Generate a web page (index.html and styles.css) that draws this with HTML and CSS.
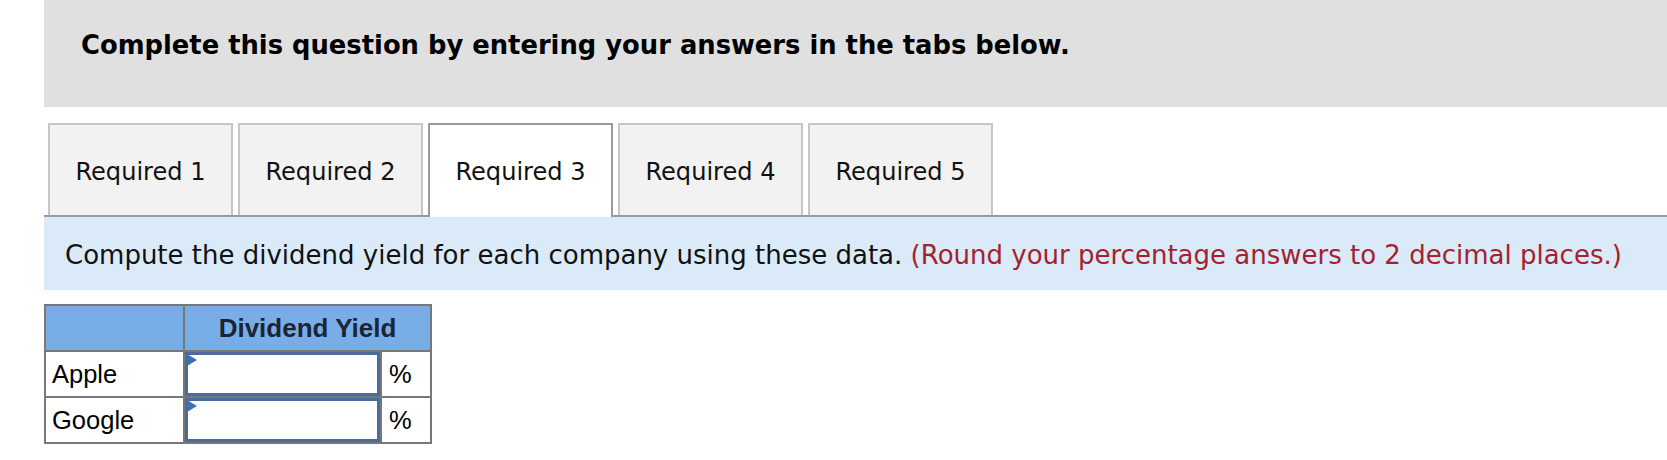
FILE: index.html
```html
<!DOCTYPE html>
<html lang="en">
<head>
<meta charset="utf-8">
<title>Dividend Yield</title>
<link rel="stylesheet" href="styles.css">
</head>
<body>
<div class="wrap">
  <div class="header">
    <h1 class="title">Complete this question by entering your answers in the tabs below.</h1>
  </div>
  <div class="tabs">
    <div class="tab">Required 1</div>
    <div class="tab">Required 2</div>
    <div class="tab active">Required 3</div>
    <div class="tab">Required 4</div>
    <div class="tab">Required 5</div>
  </div>
  <div class="instructions">
    <p class="instr-text">Compute the dividend yield for each company using these data. <span class="note">(Round your percentage answers to 2 decimal places.)</span></p>
  </div>
  <table class="grid">
    <colgroup>
      <col class="c-name">
      <col class="c-input">
      <col class="c-unit">
    </colgroup>
    <thead>
      <tr>
        <th class="blank"></th>
        <th colspan="2">Dividend Yield</th>
      </tr>
    </thead>
    <tbody>
      <tr>
        <td class="name">Apple</td>
        <td class="cell"><span class="flag"></span><input class="answer" type="text"></td>
        <td class="unit">%</td>
      </tr>
      <tr>
        <td class="name">Google</td>
        <td class="cell"><span class="flag"></span><input class="answer" type="text"></td>
        <td class="unit">%</td>
      </tr>
    </tbody>
  </table>
</div>
</body>
</html>
```
FILE: styles.css
```css
html, body {
  margin: 0;
  padding: 0;
  background: #ffffff;
}

body {
  font-family: "DejaVu Sans", Verdana, sans-serif;
  color: #000;
}

.wrap {
  margin-left: 44px;
}

.header {
  height: 107px;
  background: #e0e0e0;
  box-sizing: border-box;
  padding: 29px 0 0 37px;
}

.title {
  margin: 0;
  font-size: 25.8px;
  line-height: 32px;
  font-weight: bold;
  color: #000;
}

.tabs {
  display: flex;
  gap: 5px;
  margin-top: 16px;
  padding-left: 4px;
  border-bottom: 2px solid #9a9a9a;
  height: 92px;
}

.tab {
  width: 185px;
  height: 92px;
  box-sizing: border-box;
  border: 2px solid #c6c6c6;
  border-bottom: none;
  background: #f2f2f2;
  display: flex;
  align-items: center;
  justify-content: center;
  font-size: 24.1px;
  padding-top: 4px;
  color: #111;
}

.tab.active {
  background: #ffffff;
  border-color: #9a9a9a;
  height: 94px;
  padding-bottom: 2px;
  position: relative;
  z-index: 1;
}

.instructions {
  background: #dbeaf8;
  height: 73px;
  display: flex;
  align-items: center;
  padding-left: 21px;
  box-sizing: border-box;
  padding-top: 3px;
}

.instr-text {
  margin: 0;
  font-size: 26px;
  color: #111;
}

.note {
  color: #a4222d;
}

.grid {
  margin-top: 14px;
  border-collapse: collapse;
  font-family: "Liberation Sans", Arial, sans-serif;
  font-size: 25.5px;
  width: 386px;
  table-layout: fixed;
}

.c-name { width: 139px; }
.c-input { width: 197px; }
.c-unit { width: 50px; }

.grid th,
.grid td {
  border: 2px solid #787878;
  padding: 0;
  height: 44px;
}

.grid th {
  background: #79ade8;
  color: #1b2533;
  font-weight: bold;
  font-size: 26px;
  text-align: center;
}

.grid td.name {
  padding-left: 6px;
  text-align: left;
}

.grid td.unit {
  text-align: left;
  padding-left: 7px;
}

.grid td.cell {
  position: relative;
}

.answer {
  display: block;
  width: 100%;
  height: 44px;
  box-sizing: border-box;
  border: 3px solid #4b6c9b;
  margin: 0;
  padding: 0 4px;
  background: #fff;
  font: inherit;
}

.flag {
  position: absolute;
  left: 2px;
  top: 2px;
  width: 0;
  height: 0;
  border-left: 10px solid #3a72b8;
  border-top: 6px solid transparent;
  border-bottom: 6px solid transparent;
}
```
